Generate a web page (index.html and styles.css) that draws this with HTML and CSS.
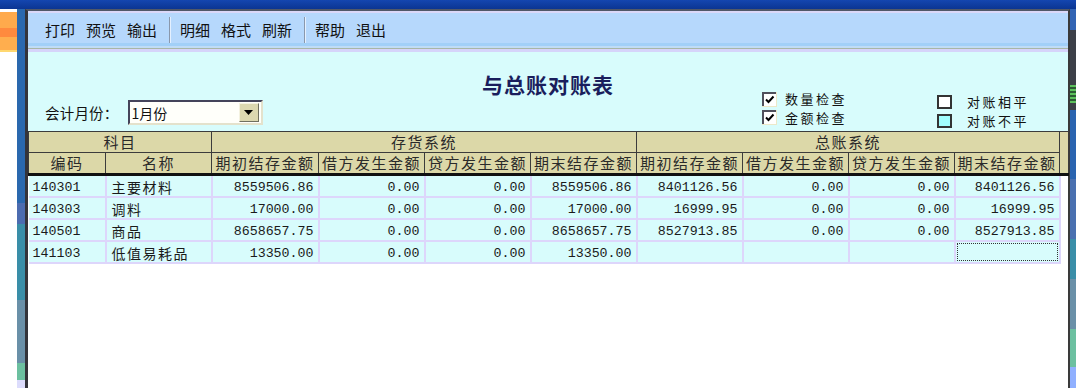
FILE: index.html
```html
<!DOCTYPE html>
<html lang="zh-CN">
<head>
  <meta charset="UTF-8">
  <title>与总账对账表</title>
  <link rel="stylesheet" href="styles.css">
</head>
<body>
  <div class="topbar"></div>
  <div class="desk">
    <div class="side"><div class="side-flag"></div></div>
    <div class="strip-l"></div>

    <div class="win">
      <div class="toolbar">
        <span class="tb-item">打印</span>
        <span class="tb-item">预览</span>
        <span class="tb-item">输出</span>
        <span class="tb-sep"></span>
        <span class="tb-item">明细</span>
        <span class="tb-item">格式</span>
        <span class="tb-item">刷新</span>
        <span class="tb-sep"></span>
        <span class="tb-item">帮助</span>
        <span class="tb-item">退出</span>
      </div>
      <div class="tb-edge"></div>

      <div class="head">
        <div class="title">与总账对账表</div>

        <div class="month">
          <span class="month-label">会计月份：</span>
          <div class="select">
            <span class="select-val">1月份</span>
            <span class="select-btn">
              <svg width="9" height="5" viewBox="0 0 9 5"><path d="M0 0H9L4.5 5Z" fill="#000"/></svg>
            </span>
          </div>
        </div>

        <div class="checks">
          <div class="check-row">
            <svg class="cbox" width="15" height="15" viewBox="0 0 15 15">
              <rect x="0" y="0" width="15" height="15" fill="#ece8c8"/>
              <rect x="0" y="0" width="14" height="14" fill="#50505c"/>
              <rect x="2" y="2" width="12" height="12" fill="#fff"/>
              <path d="M4 7.5L6.5 10L11.5 4.5" stroke="#000" stroke-width="2" fill="none"/>
            </svg>
            <span class="check-label">数量检查</span>
          </div>
          <div class="check-row">
            <svg class="cbox" width="15" height="15" viewBox="0 0 15 15">
              <rect x="0" y="0" width="15" height="15" fill="#ece8c8"/>
              <rect x="0" y="0" width="14" height="14" fill="#50505c"/>
              <rect x="2" y="2" width="12" height="12" fill="#fff"/>
              <path d="M4 7.5L6.5 10L11.5 4.5" stroke="#000" stroke-width="2" fill="none"/>
            </svg>
            <span class="check-label">金额检查</span>
          </div>
        </div>

        <div class="legend">
          <div class="legend-row"><span class="swatch"></span><span class="legend-label">对账相平</span></div>
          <div class="legend-row"><span class="swatch bad"></span><span class="legend-label">对账不平</span></div>
        </div>
      </div>

      <div class="grid-wrap">
        <table class="grid">
          <colgroup>
            <col style="width:77px">
            <col style="width:106px">
            <col style="width:107px">
            <col style="width:106px">
            <col style="width:106px">
            <col style="width:106px">
            <col style="width:106px">
            <col style="width:106px">
            <col style="width:106px">
            <col style="width:105px">
            <col style="width:9px">
          </colgroup>
          <thead>
            <tr class="r1">
              <th colspan="2">科目</th>
              <th colspan="4">存货系统</th>
              <th colspan="4">总账系统</th>
              <th rowspan="2" class="th-end"></th>
            </tr>
            <tr class="r2">
              <th>编码</th>
              <th>名称</th>
              <th>期初结存金额</th>
              <th>借方发生金额</th>
              <th>贷方发生金额</th>
              <th>期末结存金额</th>
              <th>期初结存金额</th>
              <th>借方发生金额</th>
              <th>贷方发生金额</th>
              <th>期末结存金额</th>
            </tr>
          </thead>
          <tbody>
            <tr>
              <td>140301</td>
              <td class="name">主要材料</td>
              <td class="num">8559506.86</td>
              <td class="num">0.00</td>
              <td class="num">0.00</td>
              <td class="num">8559506.86</td>
              <td class="num">8401126.56</td>
              <td class="num">0.00</td>
              <td class="num">0.00</td>
              <td class="num">8401126.56</td>
              <td class="pad"></td>
            </tr>
            <tr>
              <td>140303</td>
              <td class="name">调料</td>
              <td class="num">17000.00</td>
              <td class="num">0.00</td>
              <td class="num">0.00</td>
              <td class="num">17000.00</td>
              <td class="num">16999.95</td>
              <td class="num">0.00</td>
              <td class="num">0.00</td>
              <td class="num">16999.95</td>
              <td class="pad"></td>
            </tr>
            <tr>
              <td>140501</td>
              <td class="name">商品</td>
              <td class="num">8658657.75</td>
              <td class="num">0.00</td>
              <td class="num">0.00</td>
              <td class="num">8658657.75</td>
              <td class="num">8527913.85</td>
              <td class="num">0.00</td>
              <td class="num">0.00</td>
              <td class="num">8527913.85</td>
              <td class="pad"></td>
            </tr>
            <tr>
              <td>141103</td>
              <td class="name">低值易耗品</td>
              <td class="num">13350.00</td>
              <td class="num">0.00</td>
              <td class="num">0.00</td>
              <td class="num">13350.00</td>
              <td class="num"></td>
              <td class="num"></td>
              <td class="num"></td>
              <td class="num focus"></td>
              <td class="pad"></td>
            </tr>
          </tbody>
        </table>
      </div>
    </div>

    <div class="strip-r"></div>
  </div>
</body>
</html>
```

FILE: styles.css
```css
body {
  margin: 0;
  width: 1076px;
  height: 388px;
  overflow: hidden;
  font-family: "Noto Sans CJK SC", sans-serif;
  font-size: 14px;
  color: #111;
  background: #fff;
}
.topbar {
  height: 9px;
  background: linear-gradient(#1446b0, #0b3592);
}
.desk {
  display: flex;
  height: 379px;
}
.side {
  width: 17px;
  background: #fff;
}
.side-flag {
  margin-top: 3px;
  height: 40px;
  background: linear-gradient(#ffaa4c 0 16px, #ff8a3e 16px 25px, #ffae4e 25px 38px, #ffd870 38px);
}
.strip-l {
  width: 8px;
  background: linear-gradient(#2a68ae 0 194px, #4c6cb0 194px 215px, #3a8ea8 215px 291px, #6a90a8 291px 354px, #6cc0a0 354px 371px, #dcdcfc 371px);
}
.strip-r {
  width: 6px;
  background: linear-gradient(#3264b4 0 21px, #3c4048 21px 76px, #5cc05c 76px 78px, #2c5a34 78px 80px, #5cc05c 80px 82px, #2c5a34 82px 84px, #5cc05c 84px 86px, #2c5a34 86px 88px, #5cc05c 88px 90px, #2c5a34 90px 92px, #5cc05c 92px 94px, #3c4048 94px 101px, #2a64b0 101px 170px, #4a70b0 170px 230px, #3a8ea8 230px 270px, #6a90a8 270px 320px, #6cc0a0 320px 358px, #90b0ff 358px);
}

/* window */
.win {
  width: 1045px;
  box-sizing: border-box;
  border-top: 2px solid #505868;
  border-left: 3px solid #34343a;
  border-right: 2px solid #3a3a3a;
  display: flex;
  flex-direction: column;
  background: #fff;
}
.toolbar {
  display: flex;
  align-items: center;
  height: 27px;
  padding: 3px 0 0 17px;
  background: #b6d8fc;
  border-top: 2px solid #dad8f8;
  border-bottom: 3px solid #a2d0f8;
}
.tb-item {
  width: 30px;
  margin-right: 11px;
  font-size: 15px;
  white-space: nowrap;
  line-height: 18px;
}
.tb-sep {
  height: 26px;
  margin: 0 9px 0 1px;
  border-left: 1px solid #8a98ac;
  border-right: 1px solid #e4f0ff;
}
.tb-edge {
  height: 6px;
  background: linear-gradient(#c0dcf6 0 2px, #a8b6a6 2px 3px, #d6d4fa 3px);
}

/* report header */
.head {
  display: grid;
  grid-template-columns: 734px 175px 1fr;
  height: 79px;
  background: #d8fcfc;
}
.title {
  grid-row: 1;
  grid-column: 1 / -1;
  justify-self: center;
  padding-top: 20px;
  font-size: 21px;
  line-height: 24px;
  font-weight: bold;
  letter-spacing: 1px;
  color: #1a1e5c;
}
.month {
  grid-row: 1;
  grid-column: 1;
  align-self: end;
  display: flex;
  align-items: center;
  gap: 9px;
  padding: 0 0 6px 17px;
}
.month-label {
  font-size: 14.5px;
  letter-spacing: 0.2px;
}
.select {
  display: flex;
  align-items: center;
  justify-content: space-between;
  width: 135px;
  height: 25px;
  box-sizing: border-box;
  border: 2px solid;
  border-color: #44445a #e4e2cc #e4e2cc #44445a;
  background: #fffffa;
  padding: 0 2px;
}
.select-val {
  font-size: 14px;
  line-height: 18px;
}
.select-btn {
  display: flex;
  align-items: center;
  justify-content: center;
  width: 18px;
  height: 17px;
  background: #dcd8b0;
  border: 1px solid;
  border-color: #f4f2e0 #707060 #707060 #f4f2e0;
}
.checks {
  grid-row: 1;
  grid-column: 2;
  padding-top: 38px;
}
.check-row {
  display: flex;
  align-items: center;
  gap: 8px;
  height: 18.5px;
}
.check-label {
  font-size: 13px;
  line-height: 18px;
  letter-spacing: 2.5px;
}
.cbox {
  display: block;
}
.legend {
  grid-row: 1;
  grid-column: 3;
  padding-top: 40px;
}
.legend-row {
  display: flex;
  align-items: center;
  gap: 15px;
  height: 19px;
}
.legend-label {
  font-size: 13px;
  line-height: 19px;
  letter-spacing: 2.5px;
}
.swatch {
  width: 15px;
  height: 14px;
  box-sizing: border-box;
  border: 2px solid #333;
  background: #fff;
}
.swatch.bad {
  background: #a0fcfc;
}

/* table */
.grid-wrap {
  flex: 1;
  background: #fff;
}
.grid {
  border-collapse: collapse;
  table-layout: fixed;
  width: 1040px;
}
.grid th {
  background: #dcd8a8;
  border: 1px solid #3c3c3c;
  font-weight: normal;
  font-size: 15px;
  letter-spacing: 1.5px;
  color: #2a2a2a;
  padding: 0;
  white-space: nowrap;
  overflow: hidden;
}
.grid .r1 th {
  height: 20px;
  line-height: 20px;
}
.grid .r2 th {
  height: 20px;
  line-height: 20px;
  border-bottom: 3px solid #111;
}
.grid .th-end {
  border-bottom: 3px solid #111;
}
.grid td {
  height: 17px;
  line-height: 17px;
  padding: 3px 4px 0;
  background: #d8fcfc;
  border-right: 2px solid #ddd6fb;
  border-bottom: 2px solid #ddd6fb;
  font-family: "Liberation Mono", monospace;
  font-size: 13.3px;
  color: #1a1a1a;
  white-space: nowrap;
}
.grid td.name {
  padding-left: 5px;
  font-family: "Noto Sans CJK SC", sans-serif;
  font-size: 14px;
  letter-spacing: 1.5px;
}
.grid td.num {
  text-align: right;
}
.grid td.focus {
  outline: 1px dotted #333;
  outline-offset: -3px;
}
.grid td.pad {
  background: transparent;
  border: none;
}
```
